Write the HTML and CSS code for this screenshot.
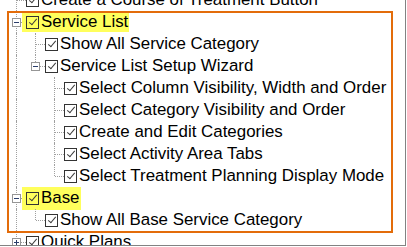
FILE: index.html
```html
<!DOCTYPE html>
<html>
<head>
<meta charset="utf-8">
<link rel="stylesheet" href="styles.css">
</head>
<body>
<div class="tree">
  <div class="rows">
    <div class="row">
      <span class="conn mid"></span>
      <span class="item"><span class="cb"></span><span class="label">Create a Course of Treatment Button</span></span>
    </div>
    <div class="row">
      <span class="conn mid"><span class="exp"></span></span>
      <span class="item hl"><span class="cb"></span><span class="label">Service List</span></span>
    </div>
    <div class="row">
      <span class="ind line"></span>
      <span class="conn mid"></span>
      <span class="item"><span class="cb"></span><span class="label">Show All Service Category</span></span>
    </div>
    <div class="row">
      <span class="ind line"></span>
      <span class="conn last"><span class="exp"></span></span>
      <span class="item"><span class="cb"></span><span class="label">Service List Setup Wizard</span></span>
    </div>
    <div class="row">
      <span class="ind line"></span><span class="ind"></span>
      <span class="conn mid"></span>
      <span class="item"><span class="cb"></span><span class="label">Select Column Visibility, Width and Order</span></span>
    </div>
    <div class="row">
      <span class="ind line"></span><span class="ind"></span>
      <span class="conn mid"></span>
      <span class="item"><span class="cb"></span><span class="label">Select Category Visibility and Order</span></span>
    </div>
    <div class="row">
      <span class="ind line"></span><span class="ind"></span>
      <span class="conn mid"></span>
      <span class="item"><span class="cb"></span><span class="label">Create and Edit Categories</span></span>
    </div>
    <div class="row">
      <span class="ind line"></span><span class="ind"></span>
      <span class="conn mid"></span>
      <span class="item"><span class="cb"></span><span class="label">Select Activity Area Tabs</span></span>
    </div>
    <div class="row">
      <span class="ind line"></span><span class="ind"></span>
      <span class="conn last"></span>
      <span class="item"><span class="cb"></span><span class="label">Select Treatment Planning Display Mode</span></span>
    </div>
    <div class="row">
      <span class="conn mid"><span class="exp"></span></span>
      <span class="item hl tall"><span class="cb"></span><span class="label">Base</span></span>
    </div>
    <div class="row">
      <span class="ind line"></span>
      <span class="conn last"></span>
      <span class="item"><span class="cb"></span><span class="label">Show All Base Service Category</span></span>
    </div>
    <div class="row">
      <span class="conn mid"><span class="exp plus"></span></span>
      <span class="item"><span class="cb"></span><span class="label">Quick Plans</span></span>
    </div>
  </div>
  <div class="frame"></div>
</div>
</body>
</html>
```

FILE: styles.css
```css
html, body {
  margin: 0;
  padding: 0;
  background: #fff;
}

.tree {
  position: relative;
  width: 405px;
  height: 245px;
  border-right: 1px solid #828282;
  border-bottom: 1px solid #828282;
  overflow: hidden;
  background: #fff;
  font-family: "Liberation Sans", Arial, sans-serif;
  font-size: 16.9px;
  color: #000;
}

.rows {
  margin-top: -11px;
  padding-left: 7px;
}

.row {
  display: flex;
  align-items: center;
  height: 22px;
  white-space: nowrap;
}

.ind,
.conn {
  position: relative;
  flex: none;
  width: 19px;
  height: 22px;
}

.ind.line::before,
.conn::before {
  content: "";
  position: absolute;
  left: 9px;
  top: 0;
  bottom: 0;
  border-left: 1px dotted #a0a0a0;
}

.conn.last::before {
  bottom: auto;
  height: 11px;
}

.conn::after {
  content: "";
  position: absolute;
  left: 10px;
  right: 0;
  top: 11px;
  border-top: 1px dotted #a0a0a0;
}

.exp {
  position: absolute;
  z-index: 1;
  left: 5px;
  top: 7px;
  width: 9px;
  height: 9px;
  box-sizing: border-box;
  border: 1px solid #969696;
  background: #fff;
}

.exp::before {
  content: "";
  position: absolute;
  left: 1px;
  top: 3px;
  width: 5px;
  height: 1px;
  background: #2b3e6b;
}

.exp.plus::after {
  content: "";
  position: absolute;
  left: 3px;
  top: 1px;
  width: 1px;
  height: 5px;
  background: #2b3e6b;
}

.item {
  position: relative;
  display: flex;
  align-items: center;
  gap: 2px;
}

.item.hl {
  background: #ffff5c;
  height: 20px;
  margin-left: -4px;
  padding: 0 1px 0 4px;
}

.item.hl.tall {
  height: 23px;
}

.cb {
  position: relative;
  flex: none;
  width: 13px;
  height: 13px;
  box-sizing: border-box;
  border: 1px solid #333;
  background: transparent;
}

.cb::after {
  content: "";
  position: absolute;
  left: 4px;
  top: 0px;
  width: 3px;
  height: 7px;
  border: solid #3c3c3c;
  border-width: 0 1.5px 1.5px 0;
  transform: rotate(40deg);
}

.label {
  line-height: 22px;
}

.frame {
  position: absolute;
  left: 7px;
  top: 11px;
  width: 386px;
  height: 222px;
  box-sizing: border-box;
  border: 2px solid #e36c0a;
  pointer-events: none;
}
```
